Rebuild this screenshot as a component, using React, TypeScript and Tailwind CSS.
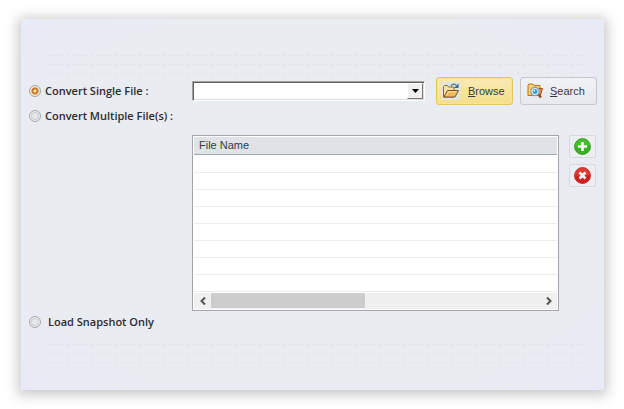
import React from "react";

const SANS = "font-['Liberation_Sans',Arial,sans-serif]";
const LABEL = "font-['Open_Sans','Noto_Sans',sans-serif] text-[11px] font-semibold text-[#2f2b2e]";

function FolderIcon() {
  return (
    <svg width="18" height="18" viewBox="0 0 18 18" aria-hidden="true">
      <rect width="18" height="18" fill="#dfe6e2" />
      <path d="M1.500 15V4.500l1-1h3l1 1.500h5.500V15z" fill="#f9e3a0" stroke="#8c6a30" />
      <path d="M1.800 15l3.700-6.500h11L13 15z" fill="#efb95a" stroke="#7c5624" />
      <path d="M4.500 13.500L6.500 9.800h8" fill="none" stroke="#fbe0a0" />
      <path d="M9 4c1-2.500 4-2.500 5.500-.5" fill="none" stroke="#4b6f98" strokeWidth="1.200" />
      <path d="M16.500 1.500v4.500h-4.500z" fill="#3f668f" />
    </svg>
  );
}

function SearchIcon() {
  return (
    <svg width="17" height="16" viewBox="0 0 17 16" aria-hidden="true">
      <path d="M1 12.500V2l1-1h4l1 1.500h6V12.500z" fill="#fbcf70" stroke="#b9731c" />
      <path d="M10 5.500h5.500L13.500 12H10z" fill="#f08c3c" stroke="#b0501c" />
      <path d="M11 11l3 3.500" stroke="#9c4a1c" strokeWidth="2.500" />
      <circle cx="8" cy="8.500" r="4.200" fill="#d8f0fc" stroke="#7f9fb8" strokeWidth="1.200" />
      <circle cx="8" cy="8.500" r="2.400" fill="#3f93dc" />
      <circle cx="7.300" cy="7.700" r=".9" fill="#e8f8ff" />
    </svg>
  );
}

function AddIcon() {
  return (
    <svg width="17" height="17" viewBox="0 0 17 17" aria-hidden="true">
      <circle cx="8.500" cy="8.500" r="8.300" fill="#48bc2e" />
      <path d="M.5 8.500a8 8 0 0 0 16 0z" fill="#3bb022" />
      <circle cx="8.500" cy="8.500" r="7.800" fill="none" stroke="#3fa52e" />
      <path d="M8.500 4v9M4 8.500h9" stroke="#fff" strokeWidth="2.600" />
    </svg>
  );
}

function RemoveIcon() {
  return (
    <svg width="17" height="17" viewBox="0 0 17 17" aria-hidden="true">
      <circle cx="8.500" cy="8.500" r="8.300" fill="#e23c32" />
      <path d="M.5 8.500a8 8 0 0 0 16 0z" fill="#d01c1c" />
      <circle cx="8.500" cy="8.500" r="7.800" fill="none" stroke="#c0392f" />
      <path d="M5.500 5.500l6 6M11.500 5.500l-6 6" stroke="#fff" strokeWidth="2.600" />
    </svg>
  );
}

function Radio({ id, label, checked, gap }: { id: string; label: string; checked?: boolean; gap?: boolean }) {
  return (
    <div className={gap ? "flex items-center gap-[7px]" : "flex items-center gap-1"}>
      <input
        id={id}
        type="radio"
        name="mode"
        defaultChecked={checked}
        className="size-3 shrink-0 appearance-none rounded-full border border-[#a3a7aa] bg-[#e6e8eb] shadow-[inset_0_0_0_1px_#f4f5f6,inset_0_0_0_2px_#c9cdd0] checked:bg-[radial-gradient(circle,#ffe3a8_0,#ffe3a8_1px,#c87a2a_2px,#c87a2a_3px,#f1e4cf_4px)] checked:shadow-none"
      />
      <label htmlFor={id} className={`${LABEL} leading-4 whitespace-nowrap`}>{label}</label>
    </div>
  );
}

function Chevron({ flip }: { flip?: boolean }) {
  return (
    <svg width="6" height="8" viewBox="0 0 6 8" aria-hidden="true" className={flip ? "rotate-180" : ""}>
      <path d="M5 .5L1.500 4L5 7.500" fill="none" stroke="#555" strokeWidth="2" />
    </svg>
  );
}

// Faint dotted band above and below the form.
function DotBand() {
  return (
    <div
      aria-hidden="true"
      className="mr-2 ml-[18px] h-[26px] bg-[radial-gradient(circle,#dde1e7_0,#dde1e7_1px,transparent_1px)] bg-[size:6px_9px]"
    />
  );
}

export default function App() {
  return (
    <div className="bg-white pt-[19px] pr-5 pb-[19px] pl-[21px]">
      <main
        className={`${SANS} bg-[radial-gradient(ellipse_farthest-corner,#e9ecf1_75%,#e8ebf6_100%)] pt-8 pr-[7px] pb-6 pl-2 text-[11px] text-[#3a3a40] shadow-[0_2px_12px_3px_rgba(0,0,0,0.22)]`}
      >
        <DotBand />
        <section className="grid grid-cols-[163px_minmax(0,1fr)] items-center">
          <Radio id="single" label="Convert Single File :" checked />
          <div className="flex h-7 items-center">
            <div className="relative mr-[11px] h-5 min-w-0 flex-1">
              <select
                aria-label="File"
                className="block h-5 w-full appearance-none border border-t-[#a0a0a0] border-r-white border-b-white border-l-[#a0a0a0] bg-white shadow-[inset_1px_1px_0_#62625e,inset_-1px_-1px_0_#dedede]"
              >
                <option value=""></option>
              </select>
              <span className="pointer-events-none absolute top-[2px] right-[2px] flex h-4 w-4 items-center justify-center border border-t-white border-r-[#777] border-b-[#777] border-l-white bg-[#f0f0f0]">
                <svg width="7" height="4" viewBox="0 0 7 4" aria-hidden="true"><path d="M0 0h7L3.500 4z" fill="#000" /></svg>
              </span>
            </div>
            <button className="mr-[7px] flex h-7 w-[77px] items-center gap-2 rounded-[3px] border border-[#e5c365] bg-linear-to-b from-[#f9eab4] to-[#f5df8c] pl-[5px] shadow-[inset_0_0_0_1px_#fbe48c]">
              <FolderIcon />
              <span><u>B</u>rowse</span>
            </button>
            <button className="flex h-7 w-[77px] items-center gap-[6px] rounded-[3px] border border-[#c3c8cd] bg-linear-to-b from-[#f0f2f5] to-[#e6e9ee] pl-[6px]">
              <SearchIcon />
              <span><u>S</u>earch</span>
            </button>
          </div>
        </section>

        <div className="mt-[3px]">
          <Radio id="multiple" label="Convert Multiple File(s) :" />
        </div>

        <section className="mt-[11px] ml-[163px] flex gap-[10px]">
          <div className="min-w-0 flex-1 border border-[#a3a6aa] bg-white p-px">
            <table className="w-full border-collapse">
              <thead>
                <tr className="h-[17px] border-b border-[#a3a6aa] bg-[#dfe2e6]">
                  <th scope="col" className="p-0 pl-[5px] text-left leading-4 font-normal">File Name</th>
                </tr>
              </thead>
              <tbody>
                {[0, 1, 2, 3, 4, 5, 6, 7].map((row) => (
                  <tr key={row} className="h-[17px] border-b border-[#ececec] first:h-[18px]">
                    <td className="p-0"></td>
                  </tr>
                ))}
              </tbody>
            </table>
            <div className="mt-px flex h-4 items-center bg-[#f0f0f0]">
              <button aria-label="Scroll left" className="flex w-[17px] justify-center"><Chevron /></button>
              <div className="h-full flex-1"><div className="h-[15px] w-[49%] max-w-[154px] bg-[#cdcdcd]" /></div>
              <button aria-label="Scroll right" className="flex w-[17px] justify-center"><Chevron flip /></button>
            </div>
          </div>
          <div className="mr-px flex flex-col gap-[6px]">
            <button aria-label="Add file" className="flex h-[23px] w-[27px] items-center justify-center rounded-[2px] border border-[#d5d9de] bg-[#eceef2]"><AddIcon /></button>
            <button aria-label="Remove file" className="flex h-[23px] w-[27px] items-center justify-center rounded-[2px] border border-[#d5d9de] bg-[#eceef2]"><RemoveIcon /></button>
          </div>
        </section>

        <div className="mt-[3px] mb-[10px]">
          <Radio id="snapshot" label="Load Snapshot Only" gap />
        </div>
        <DotBand />
      </main>
    </div>
  );
}
